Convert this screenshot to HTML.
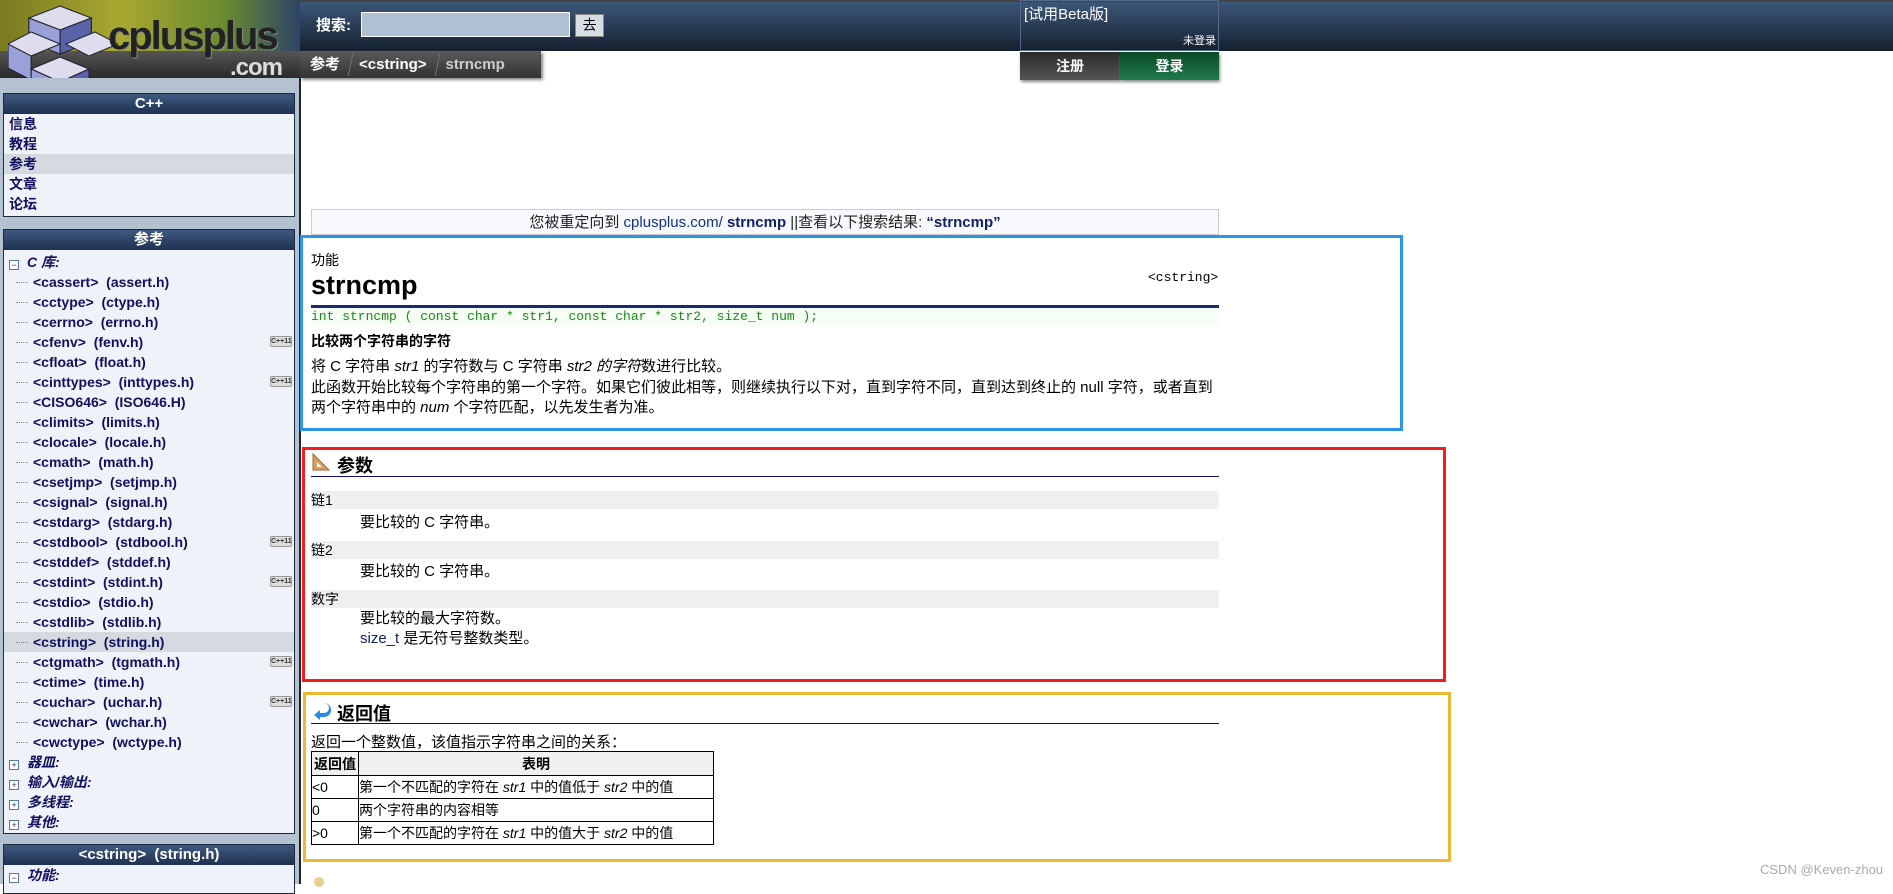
<!DOCTYPE html>
<html><head><meta charset="utf-8">
<style>
*{margin:0;padding:0;box-sizing:border-box}
body{width:1893px;height:884px;overflow:hidden;background:#fff;font-family:"Liberation Sans","Noto Sans CJK SC",sans-serif;position:relative;color:#000}
.a{position:absolute}
#hdr{left:0;top:0;width:1893px;height:51px;background:linear-gradient(#3d5779,#15202f);border-top:2px solid #444}
#logo{left:0;top:0;width:300px;height:78px;background:linear-gradient(90deg,#7a7a20,#a8a830 40%,#6a8a30 75%,#2d4566);}
#logo2{left:0;top:51px;width:300px;height:27px;background:linear-gradient(#555,#2a2a2a)}
#crumb{left:300px;top:51px;width:241px;height:27px;background:linear-gradient(#5a5a5a,#333);box-shadow:2px 2px 3px #888;color:#fff;font-weight:bold;font-size:15px;line-height:27px}
.sep{display:inline-block;width:1px;height:22px;background:#222;border-right:1px solid #777;vertical-align:middle;transform:skewX(-12deg);margin-left:10px}
#side{left:0;top:78px;width:301px;height:806px;background:#b3c1d1;border-right:2px solid #222}
.box{position:absolute;left:3px;width:292px;background:#eff2f8;border:1px solid #1c2a40}
.bh{height:20px;background:linear-gradient(#3f5a80,#1e3150);color:#fff;font-weight:bold;font-size:15px;text-align:center;line-height:20px}
.it{height:20px;line-height:20px;font-size:14px;font-weight:bold;color:#101060;padding-left:5px;white-space:nowrap;position:relative}
.hl{background:#d5dae0}
.t{padding-left:29px}
.t:before{content:"";position:absolute;left:12px;top:10px;width:12px;border-top:1px dotted #888}
.c11{position:absolute;left:266px;top:4px;width:22px;height:11px;border:1px solid #999;border-radius:2px;background:#ddd;font-size:7px;line-height:9px;text-align:center;color:#333}
.pm{display:inline-block;width:10px;height:10px;border:1px solid #5577aa;font-size:9px;line-height:8px;text-align:center;color:#335;margin-right:8px;vertical-align:-1px;font-weight:normal;background:#fff}
.cat{font-style:italic}
.main{font-size:15px}
</style></head><body>
<div id="hdr" class="a"></div>
<div id="logo" class="a"></div>
<div id="logo2" class="a"></div>
<svg class="a" style="left:8px;top:2px" width="110" height="95" viewBox="0 0 95 95" preserveAspectRatio="none">
<g stroke="#223" stroke-width="1">
<polygon points="45,4 72,16 45,28 18,16" fill="#dde"/>
<polygon points="18,16 45,28 45,52 18,40" fill="#9aa0d8"/>
<polygon points="45,28 72,16 72,40 45,52" fill="#5a62a8"/>
<polygon points="20,30 45,42 20,54 0,42" fill="#dde"/>
<polygon points="0,42 20,54 20,78 0,66" fill="#9aa0d8"/>
<polygon points="50,42 75,30 95,42 70,54" fill="#dde"/>
<polygon points="45,55 70,67 45,80 20,67" fill="#dde"/>
<polygon points="20,67 45,80 45,93 20,80" fill="#9aa0d8"/>
<polygon points="45,80 70,67 70,80 45,93" fill="#5a62a8"/>
</g></svg>
<div class="a" style="left:108px;top:14px;font-size:40px;font-weight:bold;color:#222;letter-spacing:-2px;text-shadow:1px 1px 0 #888">cplusplus</div>
<div class="a" style="left:230px;top:54px;font-size:24px;font-weight:bold;color:#ddd;letter-spacing:-1px">.com</div>
<div class="a" style="left:316px;top:14px;color:#fff;font-weight:bold;font-size:15px">搜索:</div>
<div class="a" style="left:361px;top:12px;width:209px;height:25px;background:#b0c0d4;border:1px solid #fff"></div>
<div class="a" style="left:575px;top:14px;width:29px;height:23px;background:#d8dde4;border:1px solid #888;font-size:14px;text-align:center;line-height:21px">去</div>
<div id="crumb" class="a"><span style="margin-left:10px">参考</span><span class="sep"></span><span style="margin-left:8px">&lt;cstring&gt;</span><span class="sep"></span><span style="margin-left:8px;color:#ccc">strncmp</span></div>
<div class="a" style="left:1020px;top:0;width:199px;height:51px;border:1px solid #546a88;color:#fff;font-size:15px;padding:2px 3px">[试用Beta版]<div style="position:absolute;right:2px;top:31px;font-size:11px">未登录</div></div>
<div class="a" style="left:1020px;top:52px;width:100px;height:28px;background:linear-gradient(#2a2a2a,#555);color:#fff;font-weight:bold;font-size:14px;text-align:center;line-height:28px;box-shadow:1px 2px 3px #888">注册</div>
<div class="a" style="left:1120px;top:52px;width:99px;height:28px;background:linear-gradient(#0b4a25,#1f7a4c);color:#fff;font-weight:bold;font-size:14px;text-align:center;line-height:28px;box-shadow:1px 2px 3px #888">登录</div>

<div id="side" class="a"></div>
<div class="box" style="top:93px;height:124px">
<div class="bh">C++</div>
<div class="it">信息</div><div class="it">教程</div><div class="it hl">参考</div><div class="it">文章</div><div class="it">论坛</div>
</div>
<div class="box" style="top:229px;height:605px">
<div class="bh">参考</div>
<div class="it cat" style="margin-top:2px"><span class="pm">−</span>C 库:</div>
<div class="it t">&lt;cassert&gt; &nbsp;(assert.h)</div>
<div class="it t">&lt;cctype&gt; &nbsp;(ctype.h)</div>
<div class="it t">&lt;cerrno&gt; &nbsp;(errno.h)</div>
<div class="it t">&lt;cfenv&gt; &nbsp;(fenv.h)<span class="c11">C++11</span></div>
<div class="it t">&lt;cfloat&gt; &nbsp;(float.h)</div>
<div class="it t">&lt;cinttypes&gt; &nbsp;(inttypes.h)<span class="c11">C++11</span></div>
<div class="it t">&lt;CISO646&gt; &nbsp;(ISO646.H)</div>
<div class="it t">&lt;climits&gt; &nbsp;(limits.h)</div>
<div class="it t">&lt;clocale&gt; &nbsp;(locale.h)</div>
<div class="it t">&lt;cmath&gt; &nbsp;(math.h)</div>
<div class="it t">&lt;csetjmp&gt; &nbsp;(setjmp.h)</div>
<div class="it t">&lt;csignal&gt; &nbsp;(signal.h)</div>
<div class="it t">&lt;cstdarg&gt; &nbsp;(stdarg.h)</div>
<div class="it t">&lt;cstdbool&gt; &nbsp;(stdbool.h)<span class="c11">C++11</span></div>
<div class="it t">&lt;cstddef&gt; &nbsp;(stddef.h)</div>
<div class="it t">&lt;cstdint&gt; &nbsp;(stdint.h)<span class="c11">C++11</span></div>
<div class="it t">&lt;cstdio&gt; &nbsp;(stdio.h)</div>
<div class="it t">&lt;cstdlib&gt; &nbsp;(stdlib.h)</div>
<div class="it t hl">&lt;cstring&gt; &nbsp;(string.h)</div>
<div class="it t">&lt;ctgmath&gt; &nbsp;(tgmath.h)<span class="c11">C++11</span></div>
<div class="it t">&lt;ctime&gt; &nbsp;(time.h)</div>
<div class="it t">&lt;cuchar&gt; &nbsp;(uchar.h)<span class="c11">C++11</span></div>
<div class="it t">&lt;cwchar&gt; &nbsp;(wchar.h)</div>
<div class="it t">&lt;cwctype&gt; &nbsp;(wctype.h)</div>
<div class="it cat"><span class="pm">+</span>器皿:</div>
<div class="it cat"><span class="pm">+</span>输入/输出:</div>
<div class="it cat"><span class="pm">+</span>多线程:</div>
<div class="it cat"><span class="pm">+</span>其他:</div>
</div>
<div class="box" style="top:844px;height:50px">
<div class="bh">&lt;cstring&gt; &nbsp;(string.h)</div>
<div class="it cat"><span class="pm">−</span>功能:</div>
</div>

<div class="a" style="left:311px;top:209px;width:908px;height:26px;background:#f8f9fc;border:1px solid #ccc;text-align:center;font-size:15px;line-height:26px;color:#222">您被重定向到 <span style="color:#10308a">cplusplus.com/</span> <b style="color:#10206a">strncmp</b> ||查看以下搜索结果: <b style="color:#10206a">“strncmp”</b></div>

<div class="a" style="left:300px;top:235px;width:1103px;height:196px;border:3px solid #2b95ea"></div>
<div class="a main" style="left:311px;top:250px;font-size:14px">功能</div>
<div class="a" style="left:311px;top:270px;font-size:27px;font-weight:bold">strncmp</div>
<div class="a" style="left:1148px;top:270px;font-family:'Liberation Mono',monospace;font-size:13px">&lt;cstring&gt;</div>
<div class="a" style="left:311px;top:305px;width:908px;height:3px;background:#1a2a70"></div>
<div class="a" style="left:311px;top:308px;width:908px;height:18px;background:#f6fff4;color:#1a8a1a;font-family:'Liberation Mono',monospace;font-size:13px;line-height:18px">int strncmp ( const char * str1, const char * str2, size_t num );</div>
<div class="a" style="left:311px;top:331px;font-size:14px;font-weight:bold">比较两个字符串的字符</div>
<div class="a main" style="left:311px;top:357px;width:920px;line-height:20.5px">将 C 字符串 <i>str1</i> 的字符数与 C 字符串 <i>str2 的字符</i>数进行比较。<br>此函数开始比较每个字符串的第一个字符。如果它们彼此相等，则继续执行以下对，直到字符不同，直到达到终止的 null 字符，或者直到<br>两个字符串中的 <i>num</i> 个字符匹配，以先发生者为准。</div>

<div class="a" style="left:302px;top:447px;width:1144px;height:235px;border:3px solid #f41c1c"></div>
<svg class="a" style="left:311px;top:452px" width="20" height="20"><polygon points="2,2 2,18 18,18" fill="#d8a060" stroke="#a06a30"/><polygon points="6,10 6,15 11,15" fill="#fff"/></svg>
<div class="a" style="left:337px;top:452px;font-size:18px;font-weight:bold">参数</div>
<div class="a" style="left:311px;top:476px;width:908px;height:1px;background:#10106a"></div>
<div class="a" style="left:311px;top:491px;width:908px;height:18px;background:#efefef;font-size:14px;line-height:18px">链1</div>
<div class="a main" style="left:360px;top:511px">要比较的 C 字符串。</div>
<div class="a" style="left:311px;top:541px;width:908px;height:18px;background:#efefef;font-size:14px;line-height:18px">链2</div>
<div class="a main" style="left:360px;top:560px">要比较的 C 字符串。</div>
<div class="a" style="left:311px;top:590px;width:908px;height:18px;background:#efefef;font-size:14px;line-height:18px">数字</div>
<div class="a main" style="left:360px;top:609px;line-height:20px">要比较的最大字符数。<br><span style="color:#10206a">size_t</span> 是无符号整数类型。</div>

<div class="a" style="left:303px;top:692px;width:1148px;height:170px;border:3px solid #f0b830"></div>
<svg class="a" style="left:311px;top:700px" width="20" height="20"><path d="M5 3h8a5 5 0 0 1 0 10H9v-3l-6 5 6 5v-3h4a7 7 0 0 0 0-14H5z" fill="#2a8ae0"/></svg>
<div class="a" style="left:337px;top:700px;font-size:18px;font-weight:bold">返回值</div>
<div class="a" style="left:311px;top:723px;width:908px;height:1px;background:#10106a"></div>
<div class="a main" style="left:311px;top:731px">返回一个整数值，该值指示字符串之间的关系：</div>
<table class="a" style="left:311px;top:751px;width:403px;border-collapse:collapse;font-size:14px">
<tr style="background:#f0f0f0;height:24px"><th style="border:1px solid #000;width:47px">返回值</th><th style="border:1px solid #000">表明</th></tr>
<tr style="height:23px"><td style="border:1px solid #000">&lt;0</td><td style="border:1px solid #000;white-space:nowrap">第一个不匹配的字符在 <i>str1</i> 中的值低于 <i>str2</i> 中的值</td></tr>
<tr style="height:23px"><td style="border:1px solid #000">0</td><td style="border:1px solid #000">两个字符串的内容相等</td></tr>
<tr style="height:23px"><td style="border:1px solid #000">&gt;0</td><td style="border:1px solid #000;white-space:nowrap">第一个不匹配的字符在 <i>str1</i> 中的值大于 <i>str2</i> 中的值</td></tr>
</table>
<div class="a" style="left:314px;top:877px;width:10px;height:10px;border-radius:5px;background:#e8d090"></div>
<div class="a" style="left:1760px;top:862px;font-size:13px;color:#aaa;white-space:nowrap">CSDN @Keven-zhou</div>
</body></html>
